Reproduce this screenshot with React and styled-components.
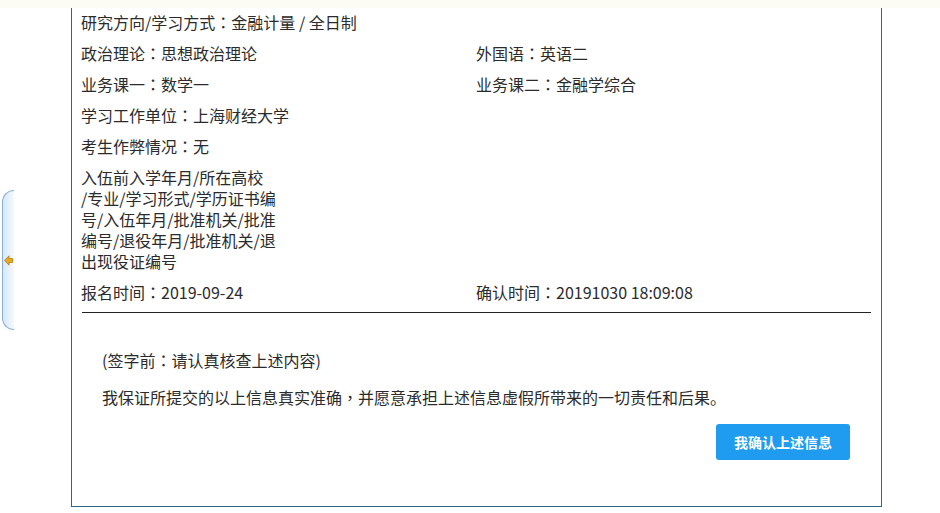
import React from "react";
import styled, { createGlobalStyle } from "styled-components";

const GlobalStyle = createGlobalStyle`
    html, body {
        margin: 0;
        padding: 0;
        background: #ffffff;
    }
    body {
        font-family: "Noto Sans CJK SC", "Microsoft YaHei", sans-serif;
        color: #2b2b2b;
    }
`;

const rows = [
    { label: "研究方向/学习方式", value: "金融计量 / 全日制" },
    [
        { label: "政治理论", value: "思想政治理论" },
        { label: "外国语", value: "英语二" },
    ],
    [
        { label: "业务课一", value: "数学一" },
        { label: "业务课二", value: "金融学综合" },
    ],
    { label: "学习工作单位", value: "上海财经大学" },
    { label: "考生作弊情况", value: "无" },
    {
        lines: [
            "入伍前入学年月/所在高校",
            "/专业/学习形式/学历证书编",
            "号/入伍年月/批准机关/批准",
            "编号/退役年月/批准机关/退",
            "出现役证编号",
        ],
    },
    [
        { label: "报名时间", value: "2019-09-24" },
        { label: "确认时间", value: "20191030 18:09:08" },
    ],
];

function Field({ label, value, full }) {
    return (
        <Cell $full={full}>
            {label}
            <Punct>：</Punct>
            {value}
        </Cell>
    );
}

function App() {
    return (
        <>
            <GlobalStyle />
            <TopStrip />
            <Page>
                <SideRail>
                    <ToggleTab>
                        <svg width="9" height="11" viewBox="0 0 9 11">
                            <polygon
                                points="0.5,5.5 5,0.8 5,3.5 8.5,3.5 8.5,7.5 5,7.5 5,10.2"
                                fill="#e8a823"
                                stroke="#b57a10"
                                strokeWidth="0.8"
                            />
                        </svg>
                    </ToggleTab>
                </SideRail>
                <Panel>
                    <InfoGrid>
                        {rows.map((row, i) => {
                            if (Array.isArray(row)) {
                                return (
                                    <React.Fragment key={i}>
                                        <Field {...row[0]} />
                                        <Field {...row[1]} />
                                    </React.Fragment>
                                );
                            }
                            if (row.lines) {
                                return (
                                    <Cell key={i} $full>
                                        {row.lines.map((l) => (
                                            <div key={l}>{l}</div>
                                        ))}
                                    </Cell>
                                );
                            }
                            return <Field key={i} {...row} full />;
                        })}
                    </InfoGrid>
                    <Divider />
                    <Confirm>
                        <Note>(签字前<Punct>：</Punct>请认真核查上述内容)</Note>
                        <Note>
                            我保证所提交的以上信息真实准确<Punct>，</Punct>并愿意承担上述信息虚假所带来的一切责任和后果。
                        </Note>
                        <ButtonRow>
                            <ConfirmButton>我确认上述信息</ConfirmButton>
                        </ButtonRow>
                    </Confirm>
                </Panel>
            </Page>
        </>
    );
}

export default App;

const TopStrip = styled.div`
    height: 8px;
    background: #fcfcf4;
`;

const Page = styled.div`
    display: flex;
    align-items: flex-start;
`;

const SideRail = styled.div`
    width: 71px;
    flex-shrink: 0;
    padding-top: 182px;
    padding-left: 2px;
    box-sizing: border-box;
`;

const ToggleTab = styled.div`
    width: 12px;
    height: 140px;
    box-sizing: border-box;
    border: 1px solid #86aed6;
    border-right: none;
    border-radius: 13px 0 0 13px;
    background: linear-gradient(to right, #d6e8f8, #f4f9fe);
    display: flex;
    align-items: center;
    padding-left: 1px;
`;

const Panel = styled.div`
    width: 811px;
    height: 499px;
    box-sizing: border-box;
    border: 1px solid #2f6682;
    border-top: none;
    padding: 4px 10px 0 9px;
`;

const InfoGrid = styled.div`
    display: grid;
    grid-template-columns: 395px 1fr;
    row-gap: 10px;
    font-size: 16px;
    line-height: 21px;
`;

const Cell = styled.div`
    grid-column: ${(p) => (p.$full ? "1 / -1" : "auto")};
    white-space: nowrap;
`;

const Punct = styled.span`
    font-family: "Noto Sans CJK TC", "Noto Sans CJK SC", sans-serif;
`;

const Divider = styled.div`
    height: 1px;
    background: #222222;
    margin: 9px 0 0 1px;
`;

const Confirm = styled.div`
    padding: 37px 21px 0 21px;
    display: flex;
    flex-direction: column;
    gap: 16px;
    font-size: 16px;
    line-height: 21px;
`;

const Note = styled.div`
    white-space: nowrap;
`;

const ButtonRow = styled.div`
    display: flex;
    justify-content: flex-end;
    margin-top: 0;
`;

const ConfirmButton = styled.button`
    width: 134px;
    height: 36px;
    border: none;
    border-radius: 3px;
    background: #1f9cf0;
    color: #ffffff;
    font-family: "Noto Sans CJK SC", sans-serif;
    font-size: 14px;
    font-weight: bold;
    cursor: pointer;
`;
